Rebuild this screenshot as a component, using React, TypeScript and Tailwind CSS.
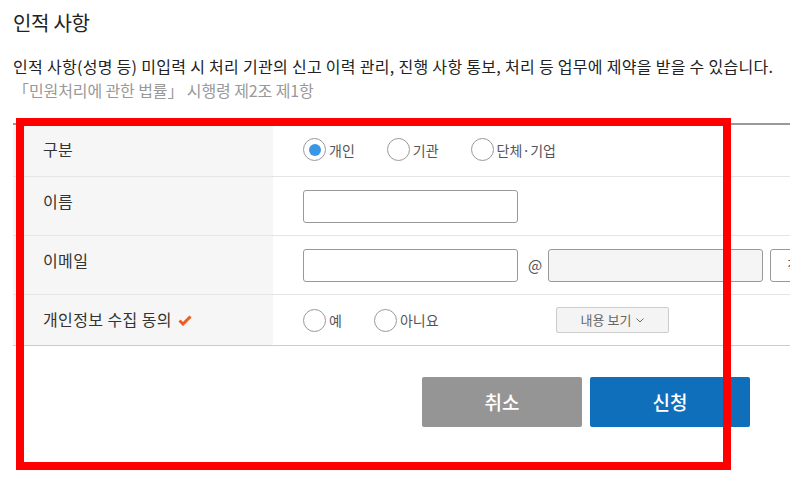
import React from "react";

const font = { fontFamily: '"Noto Sans CJK KR", "Noto Sans", sans-serif' };

function Radio({ label, checked }: { label: string; checked?: boolean }) {
  return (
    <label className="flex items-center mr-[32px] text-[14px] text-[#555]">
      <span className="flex items-center justify-center w-[23px] h-[23px] rounded-full border border-[#999] bg-white">
        {checked && <span className="w-[12px] h-[12px] rounded-full bg-[#3a97e4]" />}
      </span>
      <span className="ml-[3px] leading-[20px]">{label}</span>
    </label>
  );
}

function Row({ label, height, children, last }: { label: React.ReactNode; height: string; children: React.ReactNode; last?: boolean }) {
  return (
    <div className={`flex ${height} ${last ? "border-b border-[#ccc]" : "border-b border-[#e5e5e5]"}`}>
      <div className="w-[260px] shrink-0 bg-[#f6f6f6] pl-[30px] pt-[13px] text-[16px] tracking-[0.4px] leading-[22px] text-[#333]">
        {label}
      </div>
      <div className="flex-1 flex items-center pl-[30px]">{children}</div>
    </div>
  );
}

export default function App() {
  return (
    <div className="relative w-[790px] h-[501px] overflow-hidden bg-white" style={font}>
      <div className="pl-[13px] pt-[10px]">
        <h2 className="text-[20px] tracking-[-0.3px] leading-[26px] text-[#222]">인적 사항</h2>
        <p className="mt-[18px] text-[16px] tracking-[0.3px] leading-[24px] text-[#222] whitespace-nowrap">
          인적 사항(성명 등) 미입력 시 처리 기관의 신고 이력 관리, 진행 사항 통보, 처리 등 업무에 제약을 받을 수 있습니다.
        </p>
        <p className="text-[16px] tracking-[-0.1px] leading-[24px] text-[#999]">「민원처리에 관한 법률」 시행령 제2조 제1항</p>

        <div className="mt-[21px] w-[900px] border-t-2 border-[#999]">
          <Row label="구분" height="h-[52px]">
            <div className="flex items-center -mt-[2px]">
              <Radio label="개인" checked />
              <Radio label="기관" />
              <Radio label="단체·기업" />
            </div>
          </Row>
          <Row label="이름" height="h-[59px]">
            <input className="w-[215px] h-[33px] border border-[#999] rounded-[3px] bg-white" />
          </Row>
          <Row label="이메일" height="h-[59px]">
            <input className="w-[215px] h-[33px] border border-[#999] rounded-[3px] bg-white" />
            <span className="ml-[10px] mr-[6px] text-[15px] text-[#555]">@</span>
            <input className="w-[215px] h-[33px] border border-[#999] rounded-[3px] bg-[#f5f5f5]" />
            <div className="ml-[7px] w-[150px] h-[33px] border border-[#999] rounded-[3px] bg-white pl-[16px] flex items-center text-[14px] text-[#555]">
              직접입력
            </div>
          </Row>
          <Row
            label={
              <span className="flex items-center">
                개인정보 수집 동의
                <svg className="ml-[6px] mt-[2px]" width="14" height="11" viewBox="0 0 14 11">
                  <path d="M1.5 5.5 L5 9 L12.5 1.5" fill="none" stroke="#f25a1f" strokeWidth="3" />
                </svg>
              </span>
            }
            height="h-[51px]"
            last
          >
            <div className="flex items-center w-[253px]">
              <Radio label="예" />
              <Radio label="아니요" />
            </div>
            <button className="w-[113px] h-[26px] border border-[#ccc] rounded-[2px] bg-[#f4f4f4] text-[13px] text-[#666] flex items-center justify-center">
              내용 보기
              <svg className="ml-[5px]" width="8" height="5" viewBox="0 0 8 5">
                <path d="M0.5 0.5 L4 4 L7.5 0.5" fill="none" stroke="#666" strokeWidth="1" />
              </svg>
            </button>
          </Row>
        </div>
      </div>

      <div className="flex justify-end gap-[8px] pr-[40px] mt-[31px]">
        <button className="w-[160px] h-[50px] rounded-[2px] bg-[#959595] text-white text-[19px] font-medium">취소</button>
        <button className="w-[160px] h-[50px] rounded-[2px] bg-[#106fbb] text-white text-[19px] font-medium">신청</button>
      </div>

      <div className="absolute left-[16px] top-[118px] w-[715px] h-[352px] border-[8px] border-[#ff0000] pointer-events-none" />
    </div>
  );
}
